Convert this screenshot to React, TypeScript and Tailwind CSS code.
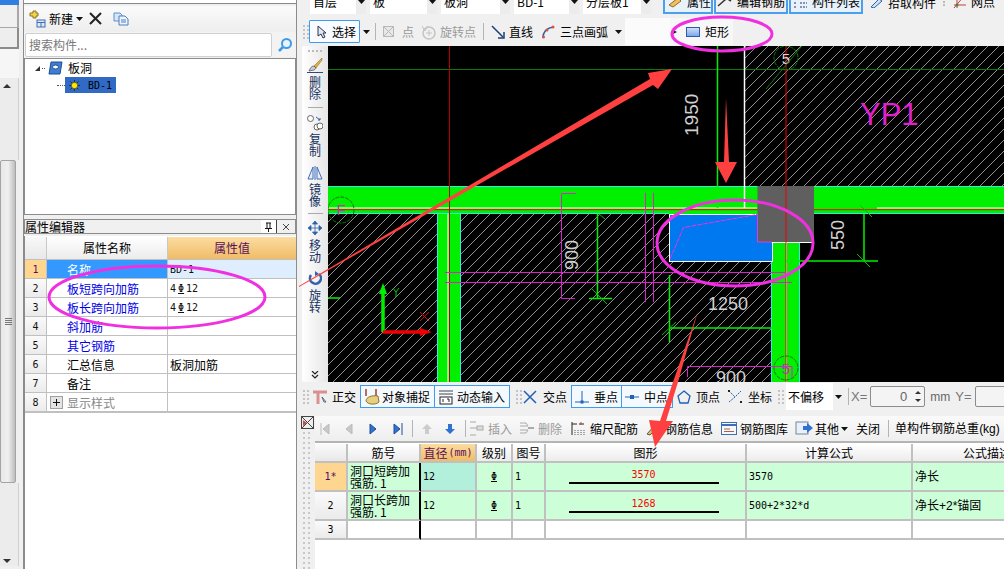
import type { ReactNode } from "react";

const Caret = ({ className = "" }: { className?: string }) => (
  <svg width="7" height="4" viewBox="0 0 7 4" className={`shrink-0 ${className}`}>
    <path d="M0 0h7L3.5 4z" fill="#111" />
  </svg>
);

const Grip = ({ className = "" }: { className?: string }) => (
  <div className={`grid grid-cols-2 gap-[2px] shrink-0 ${className}`}>
    {[0, 1, 2, 3, 4, 5, 6, 7].map((i) => (
      <span key={i} className="w-[2px] h-[2px] bg-[#c4c4c4]" />
    ))}
  </div>
);

const Sep = ({ className = "" }: { className?: string }) => (
  <span className={`w-px h-[17px] bg-[#b4b4b4] shrink-0 ${className}`} />
);

const Ic = ({ w = 16, h = 16, children, className = "" }: { w?: number; h?: number; children: ReactNode; className?: string }) => (
  <svg width={w} height={h} viewBox={`0 0 ${w} ${h}`} fill="none" className={`shrink-0 ${className}`}>
    {children}
  </svg>
);

const mono = "font-['DejaVu_Sans_Mono','Noto_Sans_CJK_SC',monospace] text-[10px]";

function Scrollbar() {
  return (
    <div className="w-[19px] shrink-0 flex flex-col">
      <div className="h-[5px] bg-[#2f7fe0]" />
      <div className="h-[23px] bg-[#f0f0f0] border-b border-r-2 border-[#a8a8a8]" />
      <div className="h-[21px] bg-[#eeeeee] border-b-2 border-r-2 border-[#8c8c8c]" />
      <div className="h-[29px] bg-[#f6f6f6]" />
      <div className="h-[82px] bg-[#ececec] flex justify-center pt-[6px] pr-[4px] border-r border-[#d0d0d0]">
        <span className="w-0 h-0 border-x-[4px] border-x-transparent border-b-[4px] border-b-[#333]" />
      </div>
      <div className="h-[323px] w-[16px] bg-linear-to-r from-[#e8e8e8] via-[#f0f0f0] to-[#bdbdbd] border border-[#a4a4a4] rounded-[2px] flex items-center justify-center">
        <span className="flex flex-col gap-[1px]">
          <span className="w-[7px] h-px bg-[#777]" />
          <span className="w-[7px] h-px bg-[#777]" />
          <span className="w-[7px] h-px bg-[#777]" />
          <span className="w-[7px] h-px bg-[#777]" />
        </span>
      </div>
      <div className="h-[83px] bg-[#ececec] flex justify-center items-end pb-[3px] pr-[4px] border-r border-[#d0d0d0]">
        <span className="w-0 h-0 border-x-[4px] border-x-transparent border-t-[4px] border-t-[#333]" />
      </div>
    </div>
  );
}

const propRows = [
  { n: "1", name: "名称", val: "BD-1", on: true },
  { n: "2", name: "板短跨向加筋", val: "4", mark: true, blue: true },
  { n: "3", name: "板长跨向加筋", val: "4", mark: true, blue: true },
  { n: "4", name: "斜加筋", val: "", blue: true },
  { n: "5", name: "其它钢筋", val: "", blue: true },
  { n: "6", name: "汇总信息", val: "板洞加筋" },
  { n: "7", name: "备注", val: "" },
  { n: "8", name: "显示样式", val: "", plus: true },
];

function LeftPanel() {
  return (
    <div className="w-[300px] shrink-0 h-full flex">
      <Scrollbar />
      <div className="w-[5px] shrink-0 bg-[#f0f0f0] border-r border-[#8c8c8c]" />
      <div className="w-[273px] flex flex-col h-full border-r border-[#8c8c8c]">
        <div className="h-[4px] border-b border-[#888] bg-white" />
        <div className="h-[2px]" />
        <div className="h-[26px] bg-linear-to-b from-[#fbfbfb] to-[#eeeeee] flex items-center pl-[4px] text-[12px]">
          <Ic w={18} h={18}>
            <path d="M2 3h3V1h3v2h2v3H8v2H5V6H2z" fill="#f4d24c" stroke="#8a7420" />
            <rect x="9" y="10" width="8" height="7" fill="#dfe9f6" stroke="#3f6fb0" />
            <path d="M9 12.5h8M13 12.5V17" stroke="#3f6fb0" />
          </Ic>
          <span className="ml-[3px] text-[#000]">新建</span>
          <Caret className="ml-[3px]" />
          <Ic w={14} h={14} className="ml-[6px]">
            <path d="M1 1l11 11M12 1L1 12" stroke="#222" strokeWidth="2" />
          </Ic>
          <Ic w={16} h={14} className="ml-[10px]">
            <path d="M1 1h6l2 2v6H1z" fill="#d7e6f8" stroke="#5b8fcf" />
            <path d="M6 4h6l3 3v6H6z" fill="#eef5fd" stroke="#4c7fbe" />
            <path d="M8 8h5M8 10h5" stroke="#4c7fbe" />
          </Ic>
        </div>
        <div className="h-[25px] bg-[#f3f3f3] flex items-center">
          <div className="w-[247px] h-[24px] bg-white border border-[#d0d0d0] rounded-[2px] flex items-center pl-[3px] text-[12px] text-[#777] ml-[1px]">
            搜索构件...
          </div>
          <Ic w={16} h={16} className="ml-[5px]">
            <circle cx="9.5" cy="6.5" r="4.5" stroke="#3f9be6" strokeWidth="2" fill="#e6f4ff" />
            <path d="M6 10l-4 4" stroke="#3f9be6" strokeWidth="2.5" />
          </Ic>
        </div>
        <div className="h-[157px] bg-white border border-[#8c8c8c] mt-[1px] text-[12px] relative">
          <div className="flex items-center h-[18px] pl-[10px]">
            <span className="w-0 h-0 border-l-[5px] border-l-transparent border-b-[5px] border-b-[#333]" />
            <span className="w-[3px] ml-[2px] border-t border-dotted border-[#555]" />
            <Ic w={15} h={15} className="ml-[3px]">
              <path d="M3 1h11l-2 12H1z" fill="#3f7fd0" stroke="#1d4d96" />
              <ellipse cx="7.5" cy="6" rx="3" ry="2" fill="#fff" stroke="#1d4d96" />
            </Ic>
            <span className="ml-[5px]">板洞</span>
          </div>
          <div className="flex items-center h-[16px] pl-[32px]">
            <span className="w-[8px] border-t border-dotted border-[#555]" />
            <div className="w-[51px] h-[16px] bg-[#316ac5] flex items-center pl-[4px]">
              <Ic w={11} h={11}>
                <path d="M5.5 0v11M0 5.5h11M1.5 1.5l8 8M9.5 1.5l-8 8" stroke="#222" strokeWidth=".8" />
                <circle cx="5.5" cy="5.5" r="3.2" fill="#ffe600" stroke="#222" strokeWidth=".6" />
              </Ic>
              <span className={`ml-[8px] ${mono} text-black`}>BD-1</span>
            </div>
          </div>
        </div>
        <div className="h-[4px]" />
        <div className="h-[15px] flex items-center border border-[#8c8c8c] bg-[#f0f0f0] text-[12px] text-black justify-between">
          <span>属性编辑器</span>
          <div className="flex items-center">
            <span className="w-[16px] h-[13px] bg-white border-r border-[#444] flex items-center justify-center">
              <Ic w={9} h={10}>
                <path d="M2 1h5M3 1v5M6 1v5M1 6.5h7M4.5 7v3" stroke="#111" />
              </Ic>
            </span>
            <span className="w-[18px] flex justify-center">
              <Ic w={8} h={8}>
                <path d="M1 1l6 6M7 1L1 7" stroke="#444" />
              </Ic>
            </span>
          </div>
        </div>
        <div className="h-[2px] bg-[#f0f0f0]" />
        <div className="flex-1 bg-white border-l border-[#8c8c8c] pt-px">
          <div className="w-[271px] grid grid-cols-[22px_121px_128px] grid-rows-[22px_repeat(8,19px)] border-b-2 border-[#c0c0c0] text-[12px]">
            <div className="bg-linear-to-b from-[#f8f8f8] to-[#e8e8e8] border-r border-[#c8c8c8]" />
            <div className="bg-linear-to-b from-[#ffffff] to-[#ececec] border-r border-[#c8c8c8] flex items-center justify-center">属性名称</div>
            <div className="bg-linear-to-b from-[#fbdca0] to-[#f0bc66] text-[#5b0f5b] flex items-center justify-center">属性值</div>
            {propRows.map((r) => (
              <div key={r.n} className="contents">
                <div className={`flex items-center justify-center border-t border-r border-[#c0c0c0] ${mono} ${r.on ? "bg-[#ffd68f] text-[#5b0f5b]" : "bg-linear-to-b from-[#fafafa] to-[#ebebeb] text-[#111]"}`}>
                  {r.n}
                </div>
                <div className={`flex items-center pt-px border-t border-r border-[#c0c0c0] ${r.on ? "bg-[#3399ff] text-white pl-[20px]" : r.plus ? "pl-[3px] text-[#888]" : r.blue ? "text-[#0000e6] pl-[20px]" : "text-black pl-[20px]"}`}>
                  {r.plus && (
                    <span className="w-[13px] h-[13px] bg-[#e4e4e4] border border-[#a0a0a0] flex items-center justify-center mr-[4px]">
                      <Ic w={7} h={7}>
                        <path d="M3.5 0v7M0 3.5h7" stroke="#111" />
                      </Ic>
                    </span>
                  )}
                  {r.name}
                </div>
                <div className={`flex items-center pt-px pl-[2px] border-t border-[#c0c0c0] ${r.on ? "bg-[#deeeff]" : ""} ${r.val && !r.mark && !r.on ? "text-black" : `${mono} text-[#111]`}`}>
                  {r.val}
                  {r.mark && (
                    <>
                      <span className="mx-[2px] underline">Φ</span>12
                    </>
                  )}
                </div>
              </div>
            ))}
          </div>
        </div>
      </div>
    </div>
  );
}

function TopBars() {
  const combos = [
    { t: "首层", w: 60 },
    { t: "板", w: 71 },
    { t: "板洞", w: 73 },
    { t: "BD-1", w: 69 },
    { t: "分层板1", w: 72 },
  ];
  return (
    <>
      <div className="h-[14px] overflow-hidden flex items-end bg-[#f0f0f0] text-[12px] pl-[10px] whitespace-nowrap">
        {combos.map((c) => (
          <div key={c.t} style={{ width: c.w }} className="h-[24px] shrink-0 flex items-center">
            <div className="flex-1 h-full bg-white pl-[3px] flex items-center">{c.t}</div>
            <div className="w-[10px] h-full bg-[#ececec] flex items-center justify-center mr-[4px]">
              <Caret />
            </div>
          </div>
        ))}
        <div className="h-[24px] flex shrink-0 items-center ml-[8px]">
          <div className="h-[24px] w-[50px] border-2 border-[#4a9fee] bg-[#e8f2fc] flex items-center pl-[3px]">
            <Ic w={14} h={12}>
              <path d="M1 9l9-7 3 3-8 6z" fill="#f0c060" stroke="#9a6a20" />
            </Ic>
            <span className="ml-[5px]">属性</span>
          </div>
          <div className="h-[24px] w-[74px] border-2 border-[#4a9fee] flex items-center pl-[1px] ml-px">
            <Ic w={16} h={12}>
              <path d="M1 10l8-7M9 2l5 3" stroke="#333" strokeWidth="1.5" />
            </Ic>
            <span className="ml-[4px]">编辑钢筋</span>
          </div>
          <div className="h-[24px] w-[74px] border-2 border-[#4a9fee] bg-[#e8f2fc] flex items-center pl-[2px] ml-px">
            <Ic w={16} h={12}>
              <path d="M1 3h3M1 7h3M1 11h3M7 3h7M7 7h7M7 11h7" stroke="#335" strokeDasharray="2 1" />
            </Ic>
            <span className="ml-[3px]">构件列表</span>
          </div>
          <Ic w={16} h={12} className="ml-[6px]">
            <path d="M2 11l8-8 3 2-8 7z" fill="#cfe2f8" stroke="#2f62ab" />
          </Ic>
          <span className="ml-[3px] mt-[1px]">拾取构件</span>
          <span className="ml-[7px] w-[2px] h-[8px] border-l-2 border-dotted border-[#bbb]" />
          <Ic w={16} h={14} className="ml-[6px]">
            <path d="M3 10h12M6 13V2M3 13l10-12" stroke="#c04040" />
            <circle cx="6" cy="10" r="1.5" fill="#3a8a3a" />
          </Ic>
          <span className="ml-[4px]">网点</span>
        </div>
      </div>
      <div className="h-[4px] bg-[#f0f0f0]" />
      <div className="h-[27px] bg-[#f0f0f0] flex items-center text-[12px] pl-[3px] whitespace-nowrap">
        <Grip />
        <div className="h-[23px] w-[51px] border border-[#3f9bef] bg-[#f8fbff] rounded-[1px] flex items-center pl-[6px]">
          <Ic w={12} h={14}>
            <path d="M2 1v10l3-2 2 4 2-1-2-4h3z" fill="#dfe8f4" stroke="#334" />
          </Ic>
          <span className="ml-[4px]">选择</span>
        </div>
        <Caret className="ml-[3px]" />
        <Sep className="ml-[5px]" />
        <Ic w={12} h={12} className="ml-[7px]">
          <rect x=".5" y=".5" width="10" height="10" fill="#e8e8e8" stroke="#b8b8b8" />
          <path d="M1 1l9 9M10 1l-9 9" stroke="#b8b8b8" />
        </Ic>
        <span className="ml-[7px] text-[#9a9a9a]">点</span>
        <Ic w={16} h={16} className="ml-[7px]">
          <circle cx="8" cy="9" r="6" stroke="#c4c4c4" strokeWidth="1.5" />
          <path d="M5 9h6M8 6v6M1 2l3 5 3-5" stroke="#c4c4c4" />
        </Ic>
        <span className="ml-[3px] text-[#9a9a9a]">旋转点</span>
        <Sep className="ml-[7px]" />
        <Ic w={14} h={14} className="ml-[7px]">
          <path d="M1 1l11 11" stroke="#1d3f73" strokeWidth="1.5" />
          <path d="M7 13h6V7" stroke="#1d3f73" strokeWidth="1.5" />
        </Ic>
        <span className="ml-[4px]">直线</span>
        <Ic w={14} h={14} className="ml-[8px]">
          <path d="M2 13C2 7 6 3 12 2" stroke="#2f62ab" strokeWidth="1.5" />
          <circle cx="2.5" cy="12" r="1.5" fill="#d9543f" />
          <circle cx="6" cy="5" r="1.5" fill="#d9543f" />
          <circle cx="12" cy="2" r="1.5" fill="#d9543f" />
        </Ic>
        <span className="ml-[5px]">三点画弧</span>
        <Caret className="ml-[7px]" />
        <div className="w-[45px] h-[27px] bg-[#fbfbfb] ml-[3px]" />
        <div className="h-[27px] w-[63px] bg-[#f7f7f7] flex items-center pl-[3px]">
          <svg width="4" height="4" viewBox="0 0 4 4" className="shrink-0 mr-[9px]">
            <path d="M0 0l4 2-4 2z" fill="#111" />
          </svg>
          <span className="w-[14px] h-[10px] bg-linear-to-b from-[#cfe0fa] to-[#7ea6e8] border border-[#2f5aa8]" />
          <span className="ml-[5px]">矩形</span>
        </div>
      </div>
    </>
  );
}

function VTool({ icon, a, b, gap, top }: { icon: ReactNode; a: string; b: string; gap: number; top: number }) {
  return (
    <div style={{ marginTop: top }} className="flex flex-col items-center leading-[12px] text-[12px] text-[#14315e]">
      {icon}
      <span style={{ marginTop: gap }}>{a}</span>
      <span>{b}</span>
    </div>
  );
}

function SideTools() {
  return (
    <div className="w-[26px] ml-[2px] h-full bg-linear-to-r from-[#ffffff] to-[#e6e6e6] flex flex-col items-center shrink-0 rounded-[2px]">
      <div className="flex gap-[2px] mt-[4px] h-[2px]">
        <span className="w-[2px] h-[2px] bg-[#bbb]" />
        <span className="w-[2px] h-[2px] bg-[#bbb]" />
        <span className="w-[2px] h-[2px] bg-[#bbb]" />
        <span className="w-[2px] h-[2px] bg-[#bbb]" />
      </div>
      <VTool
        top={6}
        gap={3}
        a="删"
        b="除"
        icon={
          <Ic w={16} h={15}>
            <path d="M15 0L7 8l2 2 6-8z" fill="#e3b040" stroke="#7a5a20" strokeWidth=".5" />
            <path d="M7 8c-3 0-4 3-5 5l5-1c2-1 2-2 2-2z" fill="#cccccc" stroke="#333" strokeWidth=".6" />
            <path d="M0 14.5h16" stroke="#2a4a80" />
          </Ic>
        }
      />
      <span className="w-[15px] h-px bg-[#aaa] mt-[7px] shrink-0" />
      <VTool
        top={7}
        gap={2}
        a="复"
        b="制"
        icon={
          <Ic w={16} h={16}>
            <circle cx="3.5" cy="3.5" r="3" stroke="#666" fill="#fff" />
            <circle cx="10" cy="12" r="3" stroke="#666" fill="#fff" />
            <circle cx="13" cy="11" r="3" stroke="#666" fill="#fff" />
            <path d="M9 2l4 3M13 5h-2M13 5V3" stroke="#2f62ab" />
          </Ic>
        }
      />
      <VTool
        top={9}
        gap={3}
        a="镜"
        b="像"
        icon={
          <Ic w={16} h={14}>
            <path d="M6 1L1 13h5zM10 1l5 12h-5zM8 0v14" stroke="#3f6fb8" fill="#e6eefb" />
          </Ic>
        }
      />
      <span className="w-[15px] h-px bg-[#aaa] mt-[6px] shrink-0" />
      <VTool
        top={7}
        gap={4}
        a="移"
        b="动"
        icon={
          <Ic w={14} h={14}>
            <path d="M7 0l2.5 3h-5zM7 14l2.5-3h-5zM0 7l3-2.5v5zM14 7l-3-2.5v5zM7 2v10M2 7h10" fill="#2f62ab" stroke="#2f62ab" strokeWidth=".8" />
          </Ic>
        }
      />
      <VTool
        top={8}
        gap={4}
        a="旋"
        b="转"
        icon={
          <Ic w={14} h={14}>
            <path d="M11 3a5.5 5.5 0 1 1-8 1" stroke="#2f62ab" strokeWidth="2.5" />
            <path d="M7 0v5l4-2z" fill="#2f62ab" />
          </Ic>
        }
      />
      <div className="flex-1" />
      <svg width="8" height="8" viewBox="0 0 8 8" className="mb-[3px]" fill="none">
        <path d="M1 0l3 3 3-3M1 4l3 3 3-3" stroke="#222" strokeWidth="1.2" />
      </svg>
    </div>
  );
}

function Drawing() {
  return (
    <svg viewBox="328 46 676 336" className="w-[676px] h-[336px] shrink-0 bg-black block">
      <defs>
        <pattern id="hatch" patternUnits="userSpaceOnUse" width="11" height="11">
          <path d="M-1 12L12 -1" stroke="#cccccc" strokeWidth=".7" />
        </pattern>
      </defs>
      {/* hatched slabs */}
      <rect x="744" y="46" width="260" height="141" fill="url(#hatch)" />
      <rect x="328" y="214" width="110" height="168" fill="url(#hatch)" />
      <rect x="461" y="214" width="311" height="168" fill="url(#hatch)" />
      {/* guide lines */}
      <path d="M328 69.5H1004" stroke="#0a7a0a" />
      {/* beam */}
      <rect x="328" y="186" width="676" height="28" fill="#00f000" />
      <path d="M328 186.5H1004M328 213.5H669M772 213.5H1004" stroke="#35e8e8" />
      <rect x="437" y="214" width="24" height="168" fill="#00f000" />
      <path d="M437.5 214V382M460.5 214V382" stroke="#35e8e8" />
      <path d="M448 214V382" stroke="#fff" />
      <path d="M328 208H757M877 208H1004" stroke="#fff" />
      <path d="M328 209.7H1004" stroke="#f00000" />
      <rect x="772" y="242" width="28" height="140" fill="#00f000" />
      <path d="M771.5 261V382M799.5 242V382" stroke="#35e8e8" />
      <path d="M717.5 46V208" stroke="#00f000" strokeWidth="1.5" />
      <path d="M744.5 46V208" stroke="#fff" strokeWidth="1.5" />
      {/* blue opening */}
      <rect x="669.5" y="214.5" width="103" height="47" fill="#0078f0" stroke="#fff" />
      <path d="M670 259L683.5 227.5L757 214.5" fill="none" stroke="#f030e0" strokeDasharray="5 1" />
      <rect x="757.5" y="186" width="56.5" height="56" fill="#5f5f5f" />
      <path d="M757.5 214V242H772" fill="none" stroke="#f030e0" />
      <path d="M772 242.5H814M772.5 242V262M786.5 242V382" stroke="#fff" />
      <path d="M786 46V382" stroke="#f00000" />
      <path d="M449.5 46V382" stroke="#b80000" />
      {/* axis bubbles */}
      <circle cx="341" cy="210" r="13" fill="none" stroke="#0a7a0a" strokeDasharray="4 1" />
      <text x="341" y="215" textAnchor="middle" fontSize="15" fill="#b040a0" fontFamily="Liberation Sans">F</text>
      <circle cx="786" cy="58" r="12" fill="none" stroke="#0a7a0a" strokeDasharray="4 1" />
      <text x="786" y="64" textAnchor="middle" fontSize="15" fill="#d8d8d8" fontFamily="Liberation Sans">5</text>
      <path d="M766 89l40-48" stroke="#0a7a0a" />
      <circle cx="786" cy="368" r="12" fill="none" stroke="#0a7a0a" strokeDasharray="4 1" />
      <text x="786" y="374" textAnchor="middle" fontSize="15" fill="#b040a0" fontFamily="Liberation Sans">5</text>
      {/* magenta rebar marks */}
      <path d="M576 193.5H561.5V298.5H575" fill="none" stroke="#e020d0" />
      <path d="M645.5 193V302M653.5 193V302" stroke="#e020d0" />
      <path d="M445 272.5H786M445 282.5H792" stroke="#e020d0" />
      <path d="M687.5 377V366.5H792V378" fill="none" stroke="#e020d0" />
      <text x="860" y="125" fontSize="31" fill="#e020d0" fontFamily="Liberation Sans">YP1</text>
      {/* dimensions */}
      <path d="M597.5 214V298M589 298.5H612" stroke="#00f000" strokeWidth="1.5" />
      <path d="M591 288l16 16M599 214l6 5" stroke="#00c000" />
      <path d="M328 298H340" stroke="#00f000" strokeWidth="1.5" />
      <path d="M864 214V261M786 261H878" stroke="#00f000" strokeWidth="1.5" />
      <path d="M857 254l13 13M860 205l12 12" stroke="#00c000" />
      <path d="M669.5 275V342M669 328H772" stroke="#00f000" strokeWidth="1.5" />
      <path d="M662 335l14-13" stroke="#00c000" />
      <text transform="translate(698 136) rotate(-90)" fontSize="19" fill="#d0d0d0" fontFamily="Liberation Sans">1950</text>
      <text transform="translate(578 270) rotate(-90)" fontSize="18" fill="#d0d0d0" fontFamily="Liberation Sans">900</text>
      <text transform="translate(844 250) rotate(-90)" fontSize="18" fill="#d0d0d0" fontFamily="Liberation Sans">550</text>
      <text x="708" y="310" fontSize="18" fill="#d0d0d0" fontFamily="Liberation Sans">1250</text>
      <text x="716" y="384" fontSize="18" fill="#d0d0d0" fontFamily="Liberation Sans">900</text>
      {/* ucs */}
      <path d="M383 332V292" stroke="#00f000" strokeWidth="3.5" />
      <path d="M383 283l-4 11h8z" fill="#00f000" />
      <path d="M383 332H424" stroke="#f00000" strokeWidth="3.5" />
      <path d="M432 332l-12-4v8z" fill="#f00000" />
      <path d="M393 288l3 4 3-4M396 292v5" stroke="#00d000" fill="none" />
      <path d="M420 312l9 9M429 312l-9 9" stroke="#e00000" />
    </svg>
  );
}

function SnapBar() {
  return (
    <div className="h-[27px] mt-px bg-[#f0f0f0] flex items-center text-[12px] pl-[3px] whitespace-nowrap">
      <Grip />
      <Ic w={16} h={16} className="ml-[3px]">
        <path d="M1 3h14M6 3v12" stroke="#d89090" strokeWidth="3" />
        <path d="M10 8l4 5-2 0z" stroke="#567" fill="#fff" />
      </Ic>
      <span className="ml-[4px]">正交</span>
      <div className="ml-[4px] h-[23px] w-[75px] shrink-0 border border-[#3f9bef] flex items-center pl-[2px] bg-[#f4f9fe]">
        <Ic w={18} h={18}>
          <path d="M3 1v7M13 1v7" stroke="#a04030" strokeWidth="1.5" />
          <path d="M3 13c0-4 6-6 12-5l1 6c-3 3-11 3-13-1z" fill="#e8cf80" stroke="#8a7430" />
        </Ic>
        <span className="ml-px">对象捕捉</span>
      </div>
      <div className="h-[23px] w-[75px] shrink-0 border border-[#3f9bef] border-l-0 flex items-center pl-[3px] bg-[#f4f9fe]">
        <Ic w={16} h={16}>
          <path d="M1 2h14M1 5h14" stroke="#444" />
          <rect x="2" y="8" width="12" height="7" fill="#fff" stroke="#222" />
          <path d="M5 10v3M9 10h2v3" stroke="#222" />
        </Ic>
        <span className="ml-[3px]">动态输入</span>
      </div>
      <Grip className="ml-[6px]" />
      <Ic w={14} h={14} className="ml-[1px]">
        <path d="M1 1l12 12M13 1L1 13" stroke="#1f62b8" strokeWidth="1.5" />
      </Ic>
      <span className="ml-[6px]">交点</span>
      <div className="ml-[4px] h-[23px] w-[51px] shrink-0 border border-[#3f9bef] flex items-center pl-[2px] bg-[#f4f9fe]">
        <Ic w={16} h={14}>
          <path d="M1 12h14M8 1v11" stroke="#1f62b8" />
          <rect x="6.5" y="10.5" width="3" height="3" fill="#1f62b8" />
        </Ic>
        <span className="ml-[4px]">垂点</span>
      </div>
      <div className="h-[23px] w-[51px] shrink-0 border border-[#3f9bef] border-l-0 flex items-center pl-[2px] bg-[#f4f9fe]">
        <Ic w={16} h={14}>
          <path d="M1 7h14" stroke="#1f62b8" />
          <rect x="6" y="5" width="4" height="4" fill="#1f62b8" />
        </Ic>
        <span className="ml-[4px]">中点</span>
      </div>
      <Ic w={14} h={14} className="ml-[4px]">
        <path d="M7 1l6 5-2 7H3L1 6z" stroke="#1f62b8" strokeWidth="1.3" />
      </Ic>
      <span className="ml-[5px]">顶点</span>
      <Ic w={16} h={15} className="ml-[7px]">
        <path d="M2 13L8 8l6-6M2 2l6 6" stroke="#1f62b8" strokeDasharray="2 1" />
        <rect x="1" y="1" width="2" height="2" fill="#222" />
        <rect x="13" y="12" width="2" height="2" fill="#222" />
      </Ic>
      <span className="ml-[5px]">坐标</span>
      <Grip className="ml-[6px]" />
      <div className="ml-[2px] w-[47px] h-[27px] shrink-0 bg-white flex items-center pl-[2px]">不偏移</div>
      <Caret className="ml-[2px]" />
      <Sep className="ml-[6px]" />
      <span className="ml-[2px] text-[#777] font-['Liberation_Sans',sans-serif] text-[13px]">X=</span>
      <div className="ml-[3px] w-[55px] h-[21px] shrink-0 border border-[#8c8c8c] rounded-[2px] bg-[#f4f4f4] flex items-center justify-end text-[13px] text-[#666]">
        <span className="mr-[5px] font-['Liberation_Sans',sans-serif]">0</span>
        <span className="w-[12px] flex flex-col items-center gap-[5px]">
          <span className="w-0 h-0 border-x-[3px] border-x-transparent border-b-[3px] border-b-[#333]" />
          <span className="w-0 h-0 border-x-[3px] border-x-transparent border-t-[3px] border-t-[#333]" />
        </span>
      </div>
      <span className="ml-[5px] text-[#666] font-['Liberation_Sans',sans-serif] text-[12px]">mm</span>
      <span className="ml-[5px] text-[#777] font-['Liberation_Sans',sans-serif] text-[13px]">Y=</span>
      <div className="ml-[3px] w-[40px] h-[21px] border border-[#8c8c8c] rounded-[2px] bg-[#f4f4f4] shrink-0" />
    </div>
  );
}

function GridToolbar() {
  return (
    <div className="h-[25px] shrink-0 bg-linear-to-b from-[#fafafa] to-[#eeeeee] flex items-center text-[12px] pl-[5px] whitespace-nowrap">
      <Ic w={10} h={12}>
        <path d="M1 0v12M9 1L3 6l6 5z" fill="#c8c8c8" stroke="#bbb" />
      </Ic>
      <Ic w={8} h={12} className="ml-[15px]">
        <path d="M7 1L1 6l6 5z" fill="#c8c8c8" stroke="#bbb" />
      </Ic>
      <Ic w={8} h={12} className="ml-[16px]">
        <path d="M1 1l6 5-6 5z" fill="#2f72d0" stroke="#1f4f9a" />
      </Ic>
      <Ic w={10} h={12} className="ml-[16px]">
        <path d="M9 0v12M1 1l6 5-6 5z" fill="#2f72d0" stroke="#1f4f9a" />
      </Ic>
      <Sep className="ml-[9px]" />
      <Ic w={10} h={10} className="ml-[9px]">
        <path d="M5 0L0 5h3v5h4V5h3z" fill="#cccccc" />
      </Ic>
      <Ic w={10} h={10} className="ml-[13px]">
        <path d="M5 10L0 5h3V0h4v5h3z" fill="#2f72d0" />
      </Ic>
      <Sep className="ml-[10px]" />
      <Ic w={16} h={15} className="ml-[3px]">
        <path d="M1 1h6M1 14h6M1 7h5M6 7h8" stroke="#aaa" />
        <rect x="8" y="5" width="6" height="4" fill="#ddd" stroke="#aaa" />
      </Ic>
      <span className="ml-[3px] text-[#9a9a9a]">插入</span>
      <Ic w={16} h={15} className="ml-[7px]">
        <path d="M1 2h6l2 3H1M1 12h6l2-3H1" stroke="#aaa" />
        <path d="M9 7h6" stroke="#aaa" strokeWidth="2" />
      </Ic>
      <span className="ml-[3px] text-[#9a9a9a]">删除</span>
      <Ic w={14} h={15} className="ml-[9px]">
        <path d="M1 3h5M8 3h5M1 1v13" stroke="#222" />
        <path d="M4 14V8M7 14V8M10 14V8M13 14V8" stroke="#555" strokeDasharray="1 1" />
        <path d="M10 1v3" stroke="#d04030" />
      </Ic>
      <span className="ml-[5px]">缩尺配筋</span>
      <Ic w={14} h={14} className="ml-[8px]">
        <path d="M1 12l8-9 3 2-8 8z" fill="#e4c060" stroke="#556" />
      </Ic>
      <span className="ml-[5px]">钢筋信息</span>
      <Ic w={16} h={13} className="ml-[8px]">
        <rect x=".5" y=".5" width="15" height="12" fill="#f4f7fc" stroke="#3f6fb0" />
        <path d="M1 3h14" stroke="#3f6fb0" strokeWidth="2" />
        <path d="M3 7h6M3 9.5h10" stroke="#b06040" />
      </Ic>
      <span className="ml-[3px]">钢筋图库</span>
      <Ic w={18} h={15} className="ml-[7px]">
        <rect x="1" y="1" width="12" height="12" fill="#eaf0fa" stroke="#789" />
        <path d="M8 5h4V2l6 5-6 5V9H8z" fill="#2f72d0" />
      </Ic>
      <span className="ml-[2px]">其他</span>
      <Caret className="ml-[2px]" />
      <span className="ml-[8px]">关闭</span>
      <Sep className="ml-[8px]" />
      <span className="ml-[6px]">
        单构件钢筋总重<span className="font-['Liberation_Sans',sans-serif]">(kg)</span>
      </span>
    </div>
  );
}

const bars = [
  { n: "1*", name: ["洞口短跨加", "强筋. 1"], shape: "3570", formula: "3570", desc: "净长", on: true },
  { n: "2", name: ["洞口长跨加", "强筋. 1"], shape: "1268", formula: "500+2*32*d", desc: "净长+2*锚固" },
];

const cellLine = "border-r-2 border-b-2 border-[#c0c0c0]";

function RebarGrid() {
  const heads = ["筋号", "直径", "级别", "图号", "图形", "计算公式", "公式描述"];
  return (
    <div className="flex-1 bg-white border-t-2 border-[#b4b4b4] overflow-hidden pt-px">
      <div className="grid grid-cols-[33px_73px_56px_36px_33px_201px_166px_150px] grid-rows-[19px_29px_29px_19px] w-[752px] text-[12px] text-black">
        <div className={`bg-linear-to-b from-[#fbfbfb] to-[#e8e8e8] ${cellLine}`} />
        {heads.map((h) =>
          h === "直径" ? (
            <div key={h} className={`bg-linear-to-b from-[#fbdca0] to-[#f0bc66] text-[#5b0f5b] flex items-center justify-center ${cellLine}`}>
              直径<span className={`${mono} ml-px`}>(mm)</span>
            </div>
          ) : (
            <div key={h} className={`bg-linear-to-b from-[#ffffff] to-[#ececec] flex items-center justify-center ${cellLine}`}>
              {h}
            </div>
          ),
        )}
        {bars.map((b) => (
          <div key={b.n} className="contents">
            <div className={`flex items-center justify-center ${mono} ${cellLine} ${b.on ? "bg-[#ffd68f] text-[#4b0f6b]" : "bg-linear-to-b from-[#fafafa] to-[#ebebeb]"}`}>
              {b.n}
            </div>
            <div className={`bg-[#ccffd8] leading-[12px] pl-[2px] flex flex-col justify-center ${cellLine} border-r-black`}>
              <span>{b.name[0]}</span>
              <span>{b.name[1]}</span>
            </div>
            <div className={`flex items-center pl-[2px] ${mono} ${cellLine} ${b.on ? "bg-[#b3f0dc]" : "bg-[#ccffd8]"}`}>12</div>
            <div className={`flex items-center justify-center bg-[#ccffd8] ${mono} ${cellLine}`}>
              <span className="underline">Φ</span>
            </div>
            <div className={`flex items-center pl-[2px] bg-[#ccffd8] ${mono} ${cellLine}`}>1</div>
            <div className={`flex flex-col items-center justify-center bg-[#ccffd8] pr-[4px] ${cellLine}`}>
              <span className={`${mono} text-[#ff0000] leading-[12px]`}>{b.shape}</span>
              <span className="w-[150px] h-[2px] bg-black mt-px" />
            </div>
            <div className={`flex items-center pl-[2px] bg-[#ccffd8] ${mono} ${cellLine}`}>{b.formula}</div>
            <div className={`flex items-center pl-[2px] bg-[#ccffd8] font-['Liberation_Sans','Noto_Sans_CJK_SC',sans-serif] ${cellLine}`}>{b.desc}</div>
          </div>
        ))}
        <div className={`flex items-center justify-center bg-linear-to-b from-[#fafafa] to-[#ebebeb] ${mono} ${cellLine}`}>3</div>
        <div className={`${cellLine} border-r-black`} />
        <div className={cellLine} />
        <div className={cellLine} />
        <div className={cellLine} />
        <div className={cellLine} />
        <div className={cellLine} />
        <div className={cellLine} />
      </div>
    </div>
  );
}

function Annotations() {
  return (
    <svg className="absolute inset-0 w-[1004px] h-[569px] pointer-events-none" viewBox="0 0 1004 569" fill="none">
      <polygon points="299,286 650,79 648,73 672,69 658,89 653,85 299,287" fill="#ff4040" />
      <polygon points="726,98 729,162 737,162 726,183 715,162 724,162" fill="#ff4040" />
      <polygon points="698,311 678,382 666,421 673,421 655,447 649,420 660,421 673,382" fill="#ff4040" />
      <ellipse cx="157" cy="297" rx="108" ry="31" stroke="#f030e0" strokeWidth="3" />
      <ellipse cx="722" cy="34" rx="50" ry="17" stroke="#f030e0" strokeWidth="3" />
      <ellipse cx="735" cy="243" rx="78" ry="43" stroke="#f030e0" strokeWidth="3" />
    </svg>
  );
}

export default function App() {
  return (
    <div className="relative w-[1004px] h-[569px] overflow-hidden flex bg-[#f0f0f0] font-['Noto_Sans_CJK_SC',sans-serif] text-black">
      <LeftPanel />
      <div className="w-[704px] flex flex-col h-full overflow-hidden">
        <TopBars />
        <div className="h-[336px] mt-px flex shrink-0">
          <SideTools />
          <Drawing />
        </div>
        <SnapBar />
        <div className="flex-1 flex pt-[6px] min-h-0">
          <div className="w-[14px] ml-px shrink-0 flex flex-col">
            <Ic w={13} h={13}>
              <rect x=".5" y=".5" width="12" height="12" fill="#eee" stroke="#444" />
              <path d="M1 1l11 11M12 1L1 12" stroke="#444" />
              <path d="M2 4l4 3-4 3z" fill="#c05050" />
            </Ic>
            <div className="grid grid-cols-2 gap-x-[2px] gap-y-[3px] w-[8px] ml-[2px] mt-[3px]">
              {Array.from({ length: 56 }).map((_, i) => (
                <span key={i} className="w-[2px] h-[2px] bg-[#c8c8c8]" />
              ))}
            </div>
          </div>
          <div className="flex-1 flex flex-col min-w-0 overflow-hidden">
            <GridToolbar />
            <RebarGrid />
          </div>
        </div>
      </div>
      <Annotations />
    </div>
  );
}
